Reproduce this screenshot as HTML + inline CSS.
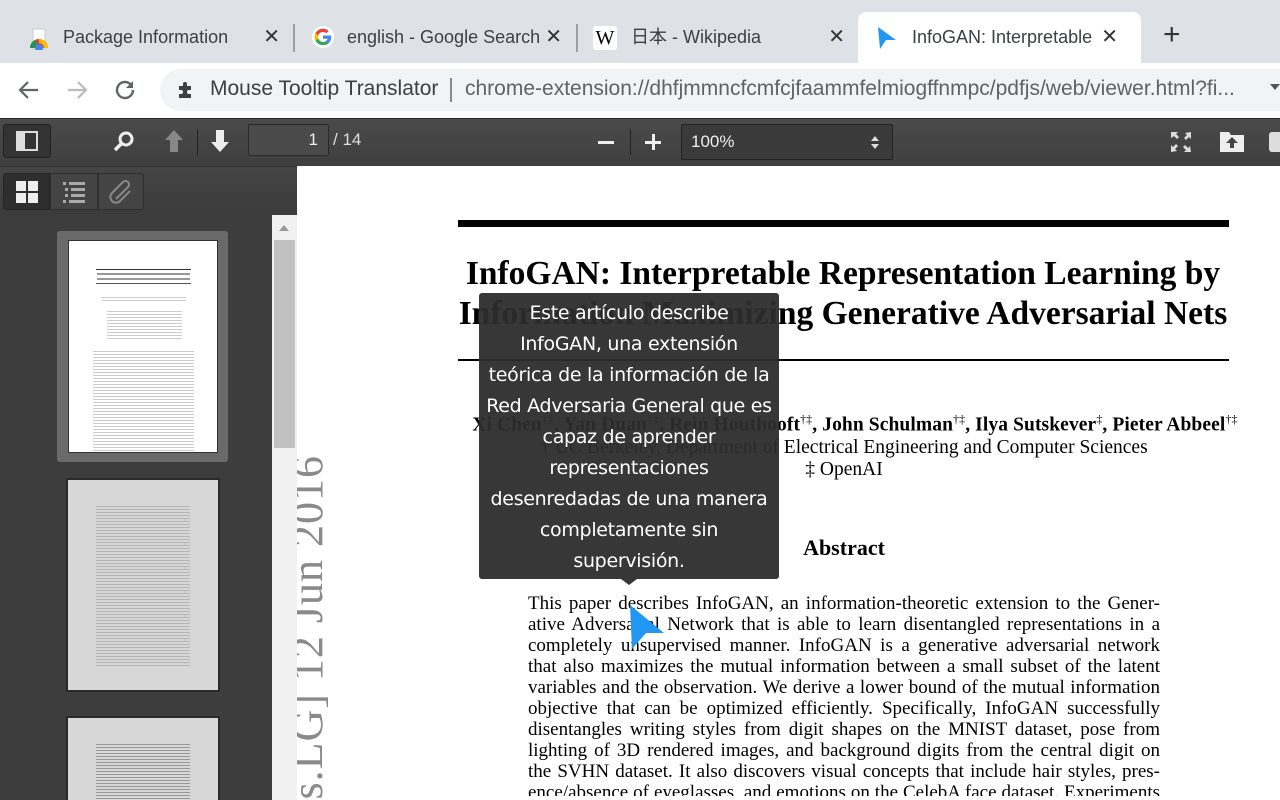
<!DOCTYPE html>
<html><head><meta charset="utf-8"><style>
*{margin:0;padding:0;box-sizing:border-box}
html,body{width:1280px;height:800px;overflow:hidden}
body{position:relative;font-family:"Liberation Sans","Noto Sans CJK JP",sans-serif;background:#fff}
.abs{position:absolute}
.tabbar{left:0;top:0;width:1280px;height:63px;background:#dee1e6}
.tab{top:12px;height:51px;font-size:18px;color:#3c4043;line-height:50px}
.tab .x{position:absolute;right:0;top:0;font-size:20px;color:#333}
.sep{top:24px;width:2px;height:28px;background:#9aa0a6}
.addr{left:0;top:63px;width:1280px;height:55px;background:#fff}
.omni{left:160px;top:69px;width:1120px;height:42px;border-radius:21px 0 0 21px;background:#f1f3f4}
.tb{left:0;top:118px;width:1280px;height:48px;background:linear-gradient(#4a4a4a,#3f3f3f);border-top:1px solid #2a2a2a}
.sbt{left:0;top:166px;width:297px;height:49px;background:linear-gradient(#454545,#3b3b3b);border-top:1px solid #333}
.sb{left:0;top:215px;width:272px;height:585px;background:#3d3d3d}
.scr{left:272px;top:215px;width:25px;height:585px;background:#f1f1f1}
.serif{font-family:"Liberation Serif",serif;color:#000}
.line{width:632px;text-align:justify;text-align-last:justify;white-space:nowrap;height:21px;overflow:hidden}
</style></head><body>
<div class="abs tabbar"></div>
<div class="abs tab" style="left:28px;width:252px">
 <svg class="abs" style="left:0;top:16px" width="22" height="22" viewBox="0 0 22 22"><rect x="5" y="1" width="12" height="20" fill="#fff" stroke="#ccc"/><path d="M2 20a9 9 0 0 1 18 0z" fill="#db4437"/><path d="M11 11a9 9 0 0 1 9 9h-4a5 5 0 0 0-5-5z" fill="#fbbc05"/><path d="M2 20a9 9 0 0 1 5-8l2 4a5 5 0 0 0-3 4z" fill="#0f9d58"/><circle cx="11" cy="20" r="4" fill="#4285f4"/></svg>
 <span class="abs" style="left:35px;top:0">Package Information</span><span class="x">✕</span></div>
<div class="abs sep" style="left:293px"></div>
<div class="abs tab" style="left:312px;width:250px;overflow:hidden">
 <svg class="abs" style="left:0;top:14px" width="22" height="22" viewBox="0 0 24 24"><circle cx="12" cy="12" r="12" fill="#fff"/><path d="M21 12.2c0-.7-.1-1.3-.2-1.9H12v3.6h5a4.3 4.3 0 0 1-1.9 2.8v2.3h3c1.8-1.6 2.9-4 2.9-6.8z" fill="#4285f4"/><path d="M12 21c2.5 0 4.6-.8 6.1-2.2l-3-2.3c-.8.6-1.9.9-3.1.9-2.4 0-4.4-1.6-5.1-3.8H3.8v2.4A9 9 0 0 0 12 21z" fill="#34a853"/><path d="M6.9 13.6a5.4 5.4 0 0 1 0-3.4V7.8H3.8a9 9 0 0 0 0 8.1z" fill="#fbbc05"/><path d="M12 6.6c1.3 0 2.6.5 3.5 1.4l2.6-2.6A9 9 0 0 0 3.8 7.8l3.1 2.4C7.6 8.1 9.6 6.6 12 6.6z" fill="#ea4335"/></svg>
 <span class="abs" style="left:35px;top:0;white-space:nowrap">english - Google Search</span><span class="x" style="background:#dee1e6;padding-left:6px">✕</span></div>
<div class="abs sep" style="left:576px"></div>
<div class="abs tab" style="left:593px;width:252px">
 <div class="abs serif" style="left:0;top:14px;width:24px;height:24px;background:#fff;border-radius:3px;font-size:20px;line-height:24px;text-align:center">W</div>
 <span class="abs" style="left:38px;top:0">日本 - Wikipedia</span><span class="x">✕</span></div>
<div class="abs" style="left:858px;top:12px;width:283px;height:52px;background:#fff;border-radius:8px 8px 0 0"></div>
<div class="abs tab" style="left:876px;width:252px;overflow:hidden">
 <svg class="abs" style="left:0;top:14px" width="22" height="24" viewBox="0 0 22 24"><path d="M2 1L20 14H10L4 23z" fill="#2196f3"/></svg>
 <span class="abs" style="left:36px;top:0;white-space:nowrap">InfoGAN: Interpretable L</span><span class="x" style="background:#fff;padding-left:6px;right:10px">✕</span></div>
<div class="abs" style="left:1163px;top:20px;font-size:30px;color:#333;line-height:30px">+</div>
<div class="abs addr"></div>
<svg class="abs" style="left:16px;top:78px" width="26" height="24" viewBox="0 0 26 24"><path d="M22 12H5M12 4l-8 8 8 8" stroke="#5f6368" stroke-width="2.2" fill="none"/></svg>
<svg class="abs" style="left:64px;top:78px" width="26" height="24" viewBox="0 0 26 24"><path d="M4 12h17M14 4l8 8-8 8" stroke="#bbb" stroke-width="2.2" fill="none"/></svg>
<svg class="abs" style="left:113px;top:77px" width="26" height="26" viewBox="0 0 26 26"><path d="M20 13a8 8 0 1 1-2.5-5.8" stroke="#5f6368" stroke-width="2.4" fill="none"/><path d="M20 4v7h-7z" fill="#5f6368"/></svg>
<div class="abs omni"></div>
<svg class="abs" style="left:176px;top:80px" width="20" height="20" viewBox="0 0 20 20"><path d="M3 6h4V4a2 2 0 0 1 4 0v2h4v4h-2a2 2 0 0 0 0 4h2v4H3v-4h2a2 2 0 0 0 0-4H3z" fill="#3c4043"/></svg>
<div class="abs" style="left:210px;top:77px;font-size:21px;color:#3c4043;white-space:nowrap">Mouse Tooltip Translator</div>
<div class="abs" style="left:450px;top:78px;width:2px;height:24px;background:#888"></div>
<div class="abs" style="left:465px;top:77px;width:795px;overflow:hidden;font-size:21px;color:#5f6368;white-space:nowrap">chrome-extension://dhfjmmncfcmfcjfaammfelmiogffnmpc/pdfjs/web/viewer.html?fi...</div>
<div class="abs" style="left:1270px;top:84px;border:5px solid transparent;border-top:6px solid #555"></div>
<div class="abs tb"></div>
<div class="abs" style="left:3px;top:124px;width:48px;height:34px;background:#333;border:1px solid #222;border-radius:3px"></div>
<div class="abs" style="left:16px;top:131px;width:22px;height:20px;border:2px solid #ddd"></div>
<div class="abs" style="left:18px;top:133px;width:7px;height:16px;background:#ddd"></div>
<svg class="abs" style="left:112px;top:130px" width="24" height="24" viewBox="0 0 24 24"><circle cx="14" cy="9" r="6" stroke="#eee" stroke-width="3" fill="none"/><path d="M10 13l-7 7" stroke="#eee" stroke-width="3.5"/></svg>
<svg class="abs" style="left:163px;top:128px" width="22" height="26" viewBox="0 0 22 26"><path d="M11 2l9 10h-5v12H7V12H2z" fill="#888"/></svg>
<div class="abs" style="left:197px;top:129px;width:1px;height:26px;background:#222"></div>
<svg class="abs" style="left:209px;top:128px" width="22" height="26" viewBox="0 0 22 26"><path d="M11 24l9-10h-5V2H7v12H2z" fill="#eee"/></svg>
<div class="abs" style="left:248px;top:124px;width:81px;height:32px;background:#4a4a4a;border:1px solid #2a2a2a;border-radius:2px;color:#eee;font-size:17px;text-align:right;padding-right:10px;line-height:30px">1</div>
<div class="abs" style="left:333px;top:130px;color:#ddd;font-size:17px">/ 14</div>
<div class="abs" style="left:598px;top:141px;width:16px;height:3px;background:#eee"></div>
<div class="abs" style="left:630px;top:129px;width:1px;height:26px;background:#222"></div>
<div class="abs" style="left:645px;top:141px;width:16px;height:3px;background:#eee"></div>
<div class="abs" style="left:652px;top:134px;width:3px;height:16px;background:#eee"></div>
<div class="abs" style="left:681px;top:124px;width:212px;height:36px;background:#3a3a3a;border:1px solid #222;border-radius:2px;color:#eee;font-size:17px;padding-left:9px;line-height:34px">100%</div>
<div class="abs" style="left:871px;top:136px;border:4px solid transparent;border-bottom:5px solid #ddd;border-top:none"></div>
<div class="abs" style="left:871px;top:144px;border:4px solid transparent;border-top:5px solid #ddd;border-bottom:none"></div>
<svg class="abs" style="left:1169px;top:130px" width="24" height="24" viewBox="0 0 24 24" fill="#ddd"><path d="M2 2h7L7 4l3 3-2 2-3-3-3 2zM22 2v7l-2-2-3 3-2-2 3-3-2-2zM2 22v-7l2 2 3-3 2 2-3 3 2 2zM22 22h-7l2-2-3-3 2-2 3 3 2-2z"/></svg>
<svg class="abs" style="left:1219px;top:129px" width="26" height="24" viewBox="0 0 26 24"><path d="M1 3h9l2 3h13v17H1z" fill="#eee"/><path d="M13 8l6 6h-4v5h-4v-5H7z" fill="#444"/></svg>
<div class="abs" style="left:1269px;top:132px;width:11px;height:20px;background:#ddd;border-radius:3px 0 0 3px"></div>
<div class="abs sbt"></div>
<div class="abs" style="left:3px;top:173px;width:47px;height:37px;background:#2e2e2e;border:1px solid #252525;border-radius:3px 0 0 3px"></div>
<div class="abs" style="left:50px;top:173px;width:48px;height:37px;background:#444;border:1px solid #2e2e2e"></div>
<div class="abs" style="left:98px;top:173px;width:46px;height:37px;background:#444;border:1px solid #2e2e2e;border-radius:0 3px 3px 0"></div>
<svg class="abs" style="left:15px;top:180px" width="24" height="24" viewBox="0 0 24 24" fill="#eee"><rect x="1" y="1" width="10" height="10"/><rect x="13" y="1" width="10" height="10"/><rect x="1" y="13" width="10" height="10"/><rect x="13" y="13" width="10" height="10"/></svg>
<svg class="abs" style="left:62px;top:180px" width="24" height="24" viewBox="0 0 24 24" fill="#aaa"><rect x="1" y="2" width="3" height="3"/><rect x="7" y="2" width="16" height="3"/><rect x="3" y="8" width="3" height="3"/><rect x="9" y="8" width="14" height="3"/><rect x="3" y="14" width="3" height="3"/><rect x="9" y="14" width="14" height="3"/><rect x="1" y="20" width="3" height="3"/><rect x="7" y="20" width="16" height="3"/></svg>
<svg class="abs" style="left:108px;top:179px" width="26" height="26" viewBox="0 0 26 26"><path d="M8 20L20 8a3.5 3.5 0 0 0-5-5L4 14a5.5 5.5 0 0 0 8 8l10-10M12 16l7-7" stroke="#888" stroke-width="2" fill="none"/></svg>
<div class="abs sb"></div>
<div class="abs" style="left:57px;top:231px;width:171px;height:231px;background:#6a6a6a;border-radius:3px"></div>
<div class="abs" style="left:68px;top:240px;width:150px;height:213px;background:#fff;border:1px solid #333">
 <div class="abs" style="left:27px;top:28px;width:95px;height:1px;background:#333"></div>
 <div class="abs" style="left:28px;top:32px;width:93px;height:2px;background:#999"></div>
 <div class="abs" style="left:28px;top:37px;width:93px;height:2px;background:#999"></div>
 <div class="abs" style="left:27px;top:42px;width:95px;height:1px;background:#555"></div>
 <div class="abs" style="left:32px;top:56px;width:85px;height:6px;background:repeating-linear-gradient(#ccc 0 1px,transparent 1px 3px)"></div>
 <div class="abs" style="left:38px;top:70px;width:75px;height:30px;background:repeating-linear-gradient(#ccc 0 1px,transparent 1px 3px)"></div>
 <div class="abs" style="left:24px;top:110px;width:101px;height:100px;background:repeating-linear-gradient(#ccc 0 1px,transparent 1px 3px)"></div>
</div>
<div class="abs" style="left:66px;top:478px;width:154px;height:214px;background:#2a2a2a"></div>
<div class="abs" style="left:68px;top:480px;width:150px;height:210px;background:#d7d7d7">
 <div class="abs" style="left:28px;top:26px;width:94px;height:160px;background:repeating-linear-gradient(#b5b5b5 0 1px,transparent 1px 3px)"></div></div>
<div class="abs" style="left:66px;top:716px;width:154px;height:84px;background:#2a2a2a"></div>
<div class="abs" style="left:68px;top:718px;width:150px;height:82px;background:#d7d7d7">
 <div class="abs" style="left:28px;top:26px;width:94px;height:56px;background:repeating-linear-gradient(#999 0 1px,transparent 1px 3px)"></div></div>
<div class="abs scr"></div>
<div class="abs" style="left:279px;top:225px;border:5px solid transparent;border-bottom:6px solid #999;border-top:none"></div>
<div class="abs" style="left:274px;top:240px;width:21px;height:208px;background:#c1c1c1"></div>
<svg class="abs" style="left:297px;top:440px" width="40" height="360" viewBox="0 0 40 360"><text transform="translate(25,15) rotate(-90)" text-anchor="end" font-family="Liberation Serif, serif" font-size="44" fill="#8a8a8a" letter-spacing="1">[cs.LG]  12 Jun 2016</text></svg>
<div class="abs" style="left:458px;top:220px;width:771px;height:7px;background:#000"></div>
<div class="abs serif" style="left:440px;top:254px;width:806px;text-align:center;font-weight:bold;font-size:33.5px;line-height:40px">InfoGAN: Interpretable Representation Learning by<br>Information Maximizing Generative Adversarial Nets</div>
<div class="abs" style="left:458px;top:359px;width:771px;height:2px;background:#000"></div>
<div class="abs serif" style="left:440px;top:412px;width:830px;text-align:center;font-size:19.5px;font-weight:bold;white-space:nowrap;letter-spacing:0.1px">Xi Chen<sup style="font-weight:normal;font-size:12px">†‡</sup>, Yan Duan<sup style="font-weight:normal;font-size:12px">†‡</sup>, Rein Houthooft<sup style="font-weight:normal;font-size:12px">†‡</sup>, John Schulman<sup style="font-weight:normal;font-size:12px">†‡</sup>, Ilya Sutskever<sup style="font-weight:normal;font-size:12px">‡</sup>, Pieter Abbeel<sup style="font-weight:normal;font-size:12px">†‡</sup></div>
<div class="abs serif" style="left:528px;top:437px;width:632px;text-align:center;font-size:19.5px;line-height:22px;white-space:nowrap">† UC Berkeley, Department of Electrical Engineering and Computer Sciences<br>‡ OpenAI</div>
<div class="abs serif" style="left:528px;top:535px;width:632px;text-align:center;font-size:22px;font-weight:bold">Abstract</div>
<div class="abs serif" style="left:528px;top:593px;width:640px;height:203px;overflow:hidden;font-size:19px;line-height:21px">
<div class="line">This paper describes InfoGAN, an information-theoretic extension to the Gener-</div>
<div class="line">ative Adversarial Network that is able to learn disentangled representations in a</div>
<div class="line">completely unsupervised manner. InfoGAN is a generative adversarial network</div>
<div class="line">that also maximizes the mutual information between a small subset of the latent</div>
<div class="line">variables and the observation. We derive a lower bound of the mutual information</div>
<div class="line">objective that can be optimized efficiently. Specifically, InfoGAN successfully</div>
<div class="line">disentangles writing styles from digit shapes on the MNIST dataset, pose from</div>
<div class="line">lighting of 3D rendered images, and background digits from the central digit on</div>
<div class="line">the SVHN dataset. It also discovers visual concepts that include hair styles, pres-</div>
<div class="line" style="height:14px">ence/absence of eyeglasses, and emotions on the CelebA face dataset. Experiments</div>
</div>
<div class="abs" style="left:479px;top:293px;width:300px;height:286px;background:rgba(44,44,44,0.95);border-radius:3px;color:#fff;font-family:'DejaVu Sans','Liberation Sans',sans-serif;font-size:19px;line-height:31px;text-align:center;padding-top:5px;letter-spacing:-0.3px">Este artículo describe<br>InfoGAN, una extensión<br>teórica de la información de la<br>Red Adversaria General que es<br>capaz de aprender<br>representaciones<br>desenredadas de una manera<br>completamente sin<br>supervisión.</div>
<div class="abs" style="left:621px;top:579px;border:8px solid transparent;border-top:6px solid rgba(44,44,44,0.95);border-bottom:none"></div>
<svg class="abs" style="left:628px;top:603px" width="38" height="48" viewBox="0 0 38 48"><path d="M2 2L36 30H18L4 46z" fill="#2196f3"/></svg>
</body></html>
